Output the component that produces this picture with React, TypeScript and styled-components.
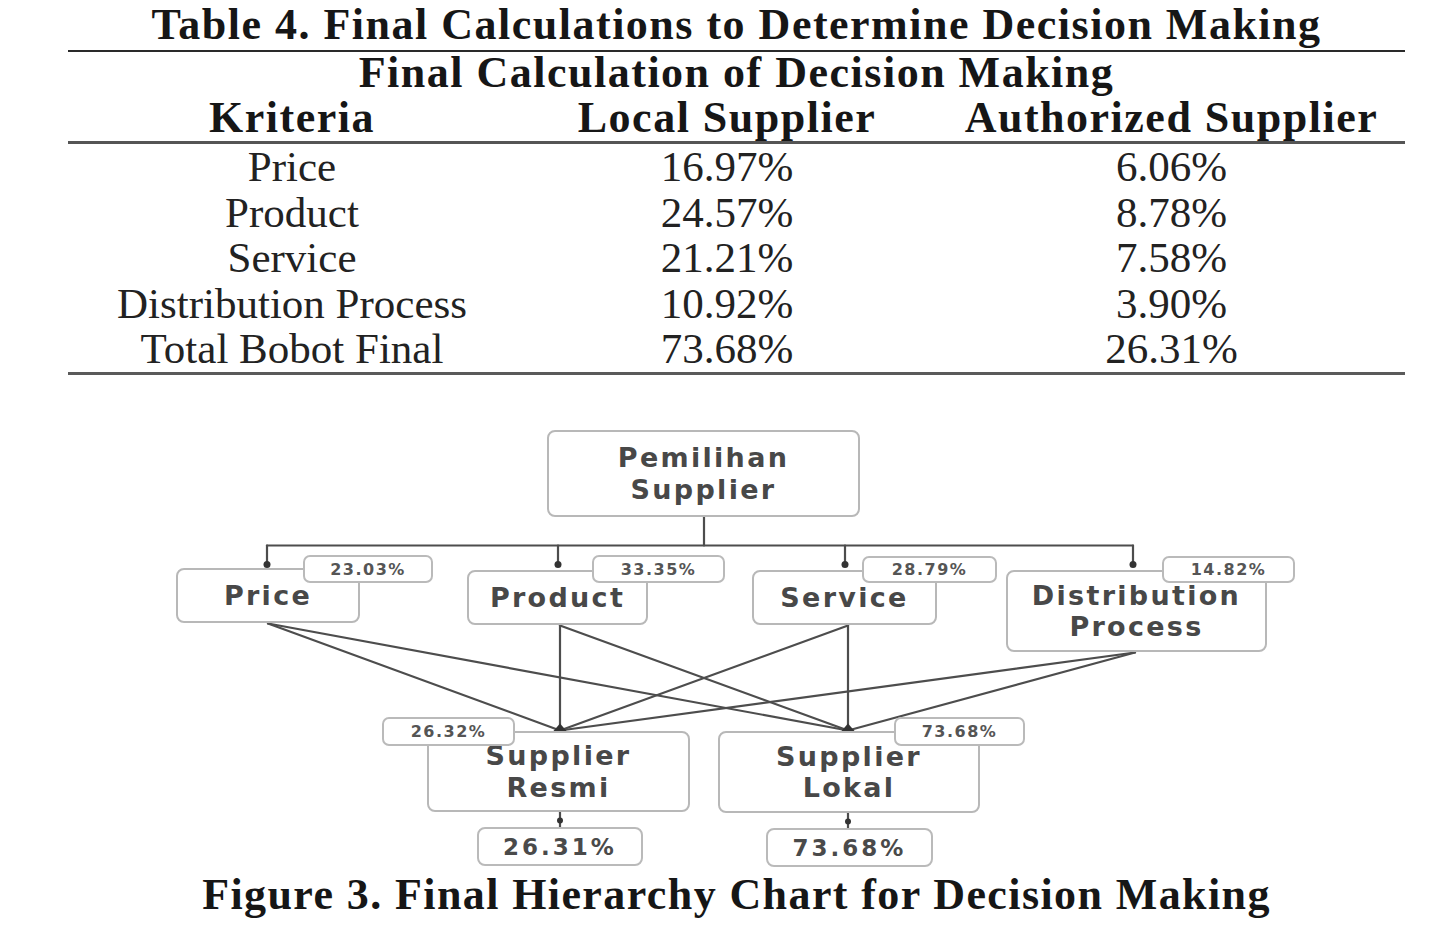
import React from "react";
import styled, { createGlobalStyle } from "styled-components";

const GlobalStyle = createGlobalStyle`
  html, body {
    margin: 0;
    padding: 0;
    background: #ffffff;
  }
  body {
    font-family: "Liberation Serif", "Times New Roman", serif;
    color: #1c1c1c;
  }
`;

const Page = styled.div`
  width: 1440px;
  height: 926px;
  overflow: hidden;
  background: #ffffff;
`;

const TableBlock = styled.section`
  width: 1337px;
  margin-left: 68px;
`;

const TableTitle = styled.h1`
  margin: 0;
  height: 50px;
  line-height: 50px;
  font-family: "Liberation Serif", "Times New Roman", serif;
  font-weight: 700;
  font-size: 44px;
  letter-spacing: 1.5px;
  text-align: center;
  color: #161616;
  border-bottom: 2px solid #2a2a2a;
`;

const Grid = styled.div`
  display: grid;
  grid-template-columns: 448px 422px 467px;
  border-bottom: 3px solid #5a5a5a;
`;

const SpanCell = styled.div`
  grid-column: 1 / -1;
  height: 42px;
  line-height: 42px;
  font-weight: 700;
  font-size: 44px;
  letter-spacing: 1.5px;
  text-align: center;
  color: #161616;
`;

const HeadCell = styled.div`
  height: 47px;
  line-height: 47px;
  font-weight: 700;
  font-size: 44px;
  letter-spacing: 1.5px;
  text-align: center;
  color: #161616;
  border-bottom: 3px solid #555555;
  white-space: nowrap;
`;

const Cell = styled.div`
  height: 45.5px;
  line-height: 45.5px;
  font-size: 43px;
  text-align: center;
  color: #222222;
  white-space: nowrap;
`;

const FIG_H = 497;

const Figure = styled.figure`
  position: relative;
  margin: 0;
  width: 1440px;
  height: ${FIG_H}px;
`;

const Connectors = styled.svg`
  position: absolute;
  left: 0;
  top: 0;
  width: 1440px;
  height: ${FIG_H}px;
`;

const Node = styled.div<{ $x: number; $y: number; $w: number; $h: number }>`
  position: absolute;
  left: ${(p) => p.$x}px;
  top: ${(p) => p.$y}px;
  width: ${(p) => p.$w}px;
  height: ${(p) => p.$h}px;
  box-sizing: border-box;
  border: 2.5px solid #b8b8b8;
  border-radius: 8px;
  background: #ffffff;
  display: flex;
  flex-direction: column;
  align-items: center;
  justify-content: center;
  font-family: "DejaVu Sans", "Liberation Sans", sans-serif;
  font-weight: 700;
  font-size: 27px;
  line-height: 31.5px;
  letter-spacing: 2.3px;
  color: #484848;
  text-align: center;
`;

const NodeLine = styled.span`
  display: block;
  white-space: nowrap;
`;

const Badge = styled.div<{ $x: number; $y: number; $w: number; $h: number }>`
  position: absolute;
  left: ${(p) => p.$x}px;
  top: ${(p) => p.$y}px;
  width: ${(p) => p.$w}px;
  height: ${(p) => p.$h}px;
  box-sizing: border-box;
  border: 2.5px solid #bababa;
  border-radius: 7px;
  background: #ffffff;
  display: flex;
  align-items: center;
  justify-content: center;
  font-family: "DejaVu Sans", "Liberation Sans", sans-serif;
  font-weight: 700;
  font-size: 16px;
  letter-spacing: 1.5px;
  color: #555555;
`;

const ValueBox = styled(Badge)`
  font-size: 23px;
  letter-spacing: 3px;
  color: #4a4a4a;
  border-radius: 8px;
`;

const Caption = styled.figcaption`
  width: 1337px;
  margin-left: 68px;
  height: 46px;
  line-height: 46px;
  text-align: center;
  font-family: "Liberation Serif", "Times New Roman", serif;
  font-weight: 700;
  font-size: 44px;
  letter-spacing: 1.4px;
  color: #161616;
`;

const rows = [
  ["Price", "16.97%", "6.06%"],
  ["Product", "24.57%", "8.78%"],
  ["Service", "21.21%", "7.58%"],
  ["Distribution Process", "10.92%", "3.90%"],
  ["Total Bobot Final", "73.68%", "26.31%"],
];

const FY = 374.5; // figure top in page coordinates

type Box = { x: number; y: number; w: number; h: number };
const nodes: (Box & { label: string[] })[] = [
  { label: ["Pemilihan", "Supplier"], x: 547, y: 430, w: 313, h: 87 },
  { label: ["Price"], x: 176, y: 568, w: 184, h: 55 },
  { label: ["Product"], x: 467, y: 570, w: 181, h: 55 },
  { label: ["Service"], x: 752, y: 570, w: 185, h: 55 },
  { label: ["Distribution", "Process"], x: 1006, y: 570, w: 261, h: 82 },
  { label: ["Supplier", "Resmi"], x: 427, y: 731, w: 263, h: 81 },
  { label: ["Supplier", "Lokal"], x: 718, y: 731, w: 262, h: 82 },
];

const badges: (Box & { text: string })[] = [
  { text: "23.03%", x: 303, y: 555, w: 130, h: 28 },
  { text: "33.35%", x: 592, y: 555, w: 133, h: 28 },
  { text: "28.79%", x: 862, y: 556, w: 135, h: 27 },
  { text: "14.82%", x: 1162, y: 556, w: 133, h: 27 },
  { text: "26.32%", x: 382, y: 717, w: 133, h: 29 },
  { text: "73.68%", x: 894, y: 717, w: 131, h: 29 },
];

const values: (Box & { text: string })[] = [
  { text: "26.31%", x: 477, y: 827, w: 166, h: 39 },
  { text: "73.68%", x: 766, y: 828, w: 167, h: 39 },
];

const sources = [
  [268, 623],
  [560, 625],
  [848, 625],
  [1135, 652],
];
const targets = [
  [560, 730],
  [848, 730],
];
const ticks = [267, 558, 845, 1133];

export default function App() {
  return (
    <Page>
      <GlobalStyle />
      <TableBlock>
        <TableTitle>Table 4. Final Calculations to Determine Decision Making</TableTitle>
        <Grid>
          <SpanCell>Final Calculation of Decision Making</SpanCell>
          <HeadCell>Kriteria</HeadCell>
          <HeadCell>Local Supplier</HeadCell>
          <HeadCell>Authorized Supplier</HeadCell>
          {rows.map((r) => (
            <React.Fragment key={r[0]}>
              <Cell>{r[0]}</Cell>
              <Cell>{r[1]}</Cell>
              <Cell>{r[2]}</Cell>
            </React.Fragment>
          ))}
        </Grid>
      </TableBlock>
      <Figure>
        <Connectors viewBox={`0 0 1440 ${FIG_H}`}>
          <g stroke="#4d4d4d" strokeWidth={2.2} fill="none" strokeLinecap="round">
            <line x1={704} y1={517 - FY} x2={704} y2={545 - FY} />
            <line x1={267} y1={545 - FY} x2={1133} y2={545 - FY} />
            {ticks.map((x) => (
              <line key={x} x1={x} y1={545 - FY} x2={x} y2={563 - FY} />
            ))}
            {sources.map(([sx, sy]) =>
              targets.map(([tx, ty]) => (
                <line key={`${sx}-${tx}`} x1={sx} y1={sy - FY} x2={tx} y2={ty - FY} />
              ))
            )}
            <line x1={560} y1={812 - FY} x2={560} y2={827 - FY} />
            <line x1={848} y1={813 - FY} x2={848} y2={828 - FY} />
          </g>
          <g fill="#333333">
            {ticks.map((x) => (
              <circle key={x} cx={x} cy={564 - FY} r={3.5} />
            ))}
            {targets.map(([tx, ty]) => (
              <path key={tx} d={`M${tx - 7} ${ty - FY + 1} L${tx} ${ty - FY - 7} L${tx + 7} ${ty - FY + 1} Z`} />
            ))}
            <circle cx={560} cy={820 - FY} r={3} />
            <circle cx={848} cy={821 - FY} r={3} />
          </g>
        </Connectors>
        {nodes.map((n) => (
          <Node key={n.label.join(" ")} $x={n.x} $y={n.y - FY} $w={n.w} $h={n.h}>
            {n.label.map((l) => (
              <NodeLine key={l}>{l}</NodeLine>
            ))}
          </Node>
        ))}
        {badges.map((b) => (
          <Badge key={b.text + b.x} $x={b.x} $y={b.y - FY} $w={b.w} $h={b.h}>
            {b.text}
          </Badge>
        ))}
        {values.map((v) => (
          <ValueBox key={v.text + v.x} $x={v.x} $y={v.y - FY} $w={v.w} $h={v.h}>
            {v.text}
          </ValueBox>
        ))}
      </Figure>
      <Caption>Figure 3. Final Hierarchy Chart for Decision Making</Caption>
    </Page>
  );
}
